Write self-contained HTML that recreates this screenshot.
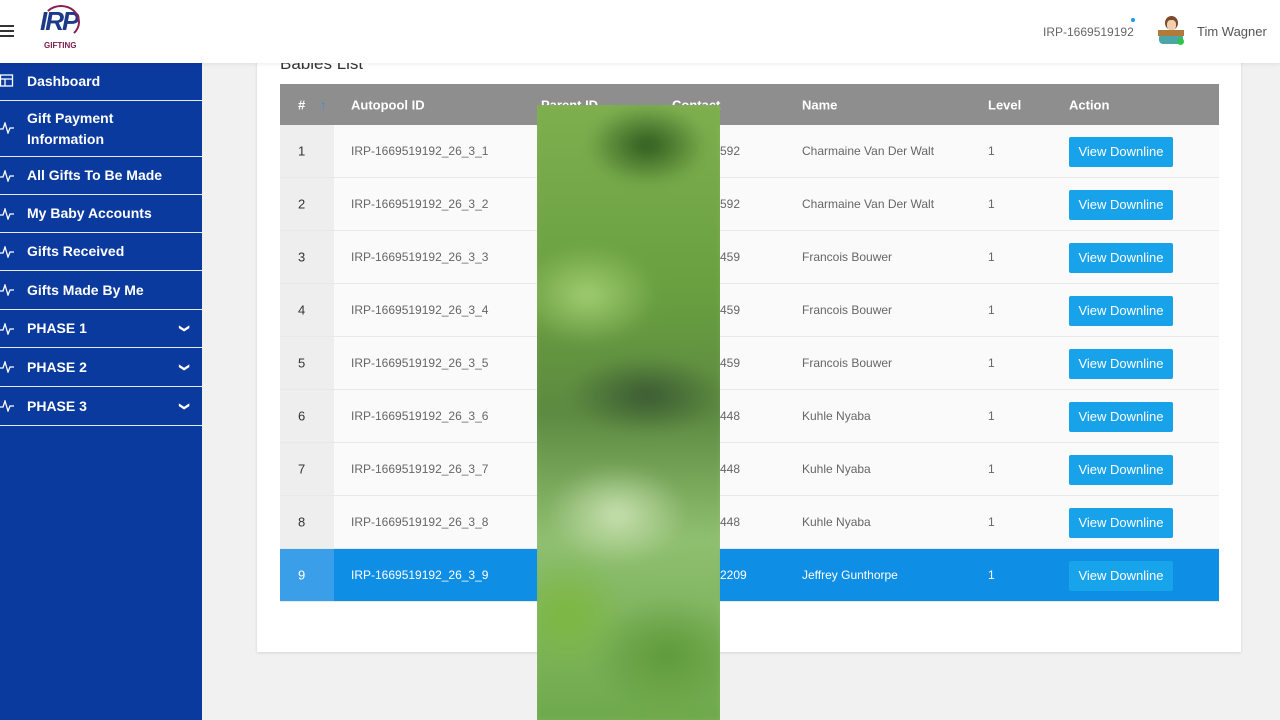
<!DOCTYPE html>
<html><head><meta charset="utf-8"><style>
*{box-sizing:border-box;margin:0;padding:0}
body{width:1280px;height:720px;overflow:hidden;background:#f1f1f1;font-family:"Liberation Sans",sans-serif;position:relative}
.hdr{position:absolute;left:0;top:0;width:1280px;height:63px;background:#fff;box-shadow:0 1px 4px rgba(0,0,0,.08);z-index:2}
.side{position:absolute;left:0;top:63px;width:202px;height:657px;background:#0a3a9e}
.it{position:absolute;left:0;width:202px;border-bottom:1px solid #e6ecf7;color:#fff;font-weight:bold;font-size:14px;line-height:21px;padding-left:27px;display:flex;align-items:center}
.it svg{position:absolute;left:0}
.it .car{position:absolute;right:14px;font-size:10px}
.card{position:absolute;left:257px;top:50px;width:984px;height:602px;background:#fff;box-shadow:0 1px 3px rgba(0,0,0,.12)}
.tbl{position:absolute;left:280px;top:84px;width:939px}
.th{height:41px;background:#8e8e8e;color:#fff;font-size:13px;font-weight:bold;position:relative}
.row{height:53px;position:relative;border-bottom:1px solid #e8e8e8;font-size:12px;color:#666;background:#fafafa}
.row .n{position:absolute;left:0;top:0;width:54px;height:100%;background:#eeeeee}
.c{position:absolute;top:50%;transform:translateY(-50%)}
.btn{position:absolute;left:789px;top:12px;width:104px;height:30px;background:#17a2ea;color:#fff;font-size:13px;border-radius:2px;text-align:center;line-height:30px}
.sel{background:#0f8ee6;color:#fff}
.sel .n{background:#3a9fe8}
.sel .btn{background:#18a4ea}
.blur{position:absolute;left:537px;top:105px;width:183px;height:615px;z-index:3;filter:blur(6px);background:
radial-gradient(ellipse 60px 40px at 120px 50px,#2e5a1e,transparent),
radial-gradient(ellipse 70px 50px at 60px 200px,#a0cc70,transparent),
radial-gradient(ellipse 80px 40px at 120px 300px,#3b5a33,transparent),
radial-gradient(ellipse 70px 50px at 90px 420px,#c8e0b0,transparent),
radial-gradient(ellipse 60px 60px at 40px 520px,#7cb840,transparent),
radial-gradient(ellipse 80px 60px at 140px 560px,#5e9a3a,transparent),
linear-gradient(#7fb050,#6aa040 30%,#5c8a40 50%,#8fbf70 70%,#6da84a)}
.bw{position:absolute;left:537px;top:105px;width:183px;height:615px;overflow:hidden;z-index:3}
.car{display:inline-block;transform:rotate(90deg)}
</style></head><body>
<div class="hdr">
<div style="position:absolute;left:0;top:25px;width:14px;height:2px;background:#333;box-shadow:0 5px 0 #333,0 10px 0 #333"></div>
<div style="position:absolute;left:40px;top:6px;font-style:italic;font-weight:bold;font-size:26px;color:#1d3a8a;letter-spacing:-2px">IRP</div>
<div style="position:absolute;left:42px;top:5px;width:38px;height:34px;border:2px solid #8a2050;border-radius:50%;border-left-color:transparent;border-bottom-color:transparent"></div>
<div style="position:absolute;left:44px;top:41px;font-size:8px;font-weight:bold;color:#7a2050">GIFTING</div>
<div style="position:absolute;left:1043px;top:25px;font-size:12px;color:#666">IRP-1669519192</div>
<div style="position:absolute;left:1131px;top:18px;width:4px;height:4px;border-radius:50%;background:#1a9ae8"></div>
<div style="position:absolute;left:1158px;top:16px;width:26px;height:30px">
<div style="position:absolute;left:7px;top:0;width:13px;height:14px;border-radius:50%;background:#7a4a2a"></div>
<div style="position:absolute;left:9px;top:4px;width:9px;height:10px;border-radius:40%;background:#f2cfae"></div>
<div style="position:absolute;left:1px;top:14px;width:24px;height:14px;border-radius:8px 8px 4px 4px;background:#4aa6a8"></div>
<div style="position:absolute;left:0;top:14px;width:26px;height:6px;background:#b07a3a"></div>
<div style="position:absolute;left:19px;top:22px;width:7px;height:7px;border-radius:50%;background:#2ec44a"></div></div>
<div style="position:absolute;left:1197px;top:24px;font-size:13px;color:#555">Tim Wagner</div>
</div>
<div class="side">
<div class="it" style="top:0;height:38px"><svg width="14" height="14" viewBox="0 0 14 14" style="top:11px" fill="none" stroke="#fff" stroke-width="1.3"><rect x="0.5" y="1" width="12" height="11"/><path d="M0.5 5h12M5 5v7"/></svg>Dashboard</div>
<div class="it" style="top:38px;height:56px"><svg width="14" height="12" viewBox="0 0 14 12" style="top:21px" fill="none" stroke="#fff" stroke-width="1.3"><path d="M0 7h3l2-6 3 10 2-5h4"/></svg>Gift Payment<br>Information</div>
<div class="it" style="top:94px;height:38px"><svg width="14" height="12" viewBox="0 0 14 12" style="top:13px" fill="none" stroke="#fff" stroke-width="1.3"><path d="M0 7h3l2-6 3 10 2-5h4"/></svg>All Gifts To Be Made</div>
<div class="it" style="top:132px;height:38px"><svg width="14" height="12" viewBox="0 0 14 12" style="top:13px" fill="none" stroke="#fff" stroke-width="1.3"><path d="M0 7h3l2-6 3 10 2-5h4"/></svg>My Baby Accounts</div>
<div class="it" style="top:170px;height:38px"><svg width="14" height="12" viewBox="0 0 14 12" style="top:13px" fill="none" stroke="#fff" stroke-width="1.3"><path d="M0 7h3l2-6 3 10 2-5h4"/></svg>Gifts Received</div>
<div class="it" style="top:208px;height:39px"><svg width="14" height="12" viewBox="0 0 14 12" style="top:13px" fill="none" stroke="#fff" stroke-width="1.3"><path d="M0 7h3l2-6 3 10 2-5h4"/></svg>Gifts Made By Me</div>
<div class="it" style="top:247px;height:38px"><svg width="14" height="12" viewBox="0 0 14 12" style="top:13px" fill="none" stroke="#fff" stroke-width="1.3"><path d="M0 7h3l2-6 3 10 2-5h4"/></svg>PHASE 1<span class="car">&#10095;</span></div>
<div class="it" style="top:285px;height:39px"><svg width="14" height="12" viewBox="0 0 14 12" style="top:13px" fill="none" stroke="#fff" stroke-width="1.3"><path d="M0 7h3l2-6 3 10 2-5h4"/></svg>PHASE 2<span class="car">&#10095;</span></div>
<div class="it" style="top:324px;height:39px"><svg width="14" height="12" viewBox="0 0 14 12" style="top:13px" fill="none" stroke="#fff" stroke-width="1.3"><path d="M0 7h3l2-6 3 10 2-5h4"/></svg>PHASE 3<span class="car">&#10095;</span></div>
</div>
<div class="card"><div style="position:absolute;left:23px;top:4px;font-size:17px;color:#333">Babies List</div></div>
<div class="tbl">
<div class="th"><span class="c" style="left:18px">#</span><span class="c" style="left:40px;color:#3a8fd8;font-weight:normal">&#8593;</span><span class="c" style="left:71px">Autopool ID</span><span class="c" style="left:261px">Parent ID</span><span class="c" style="left:392px">Contact</span><span class="c" style="left:522px">Name</span><span class="c" style="left:708px">Level</span><span class="c" style="left:789px">Action</span></div>
<div class="row"><div class="n"></div><span class="c" style="left:18px;font-size:13px;color:#333">1</span><span class="c" style="left:71px">IRP-1669519192_26_3_1</span><span class="c" style="left:440px">592</span><span class="c" style="left:522px">Charmaine Van Der Walt</span><span class="c" style="left:708px">1</span><div class="btn">View Downline</div></div>
<div class="row"><div class="n"></div><span class="c" style="left:18px;font-size:13px;color:#333">2</span><span class="c" style="left:71px">IRP-1669519192_26_3_2</span><span class="c" style="left:440px">592</span><span class="c" style="left:522px">Charmaine Van Der Walt</span><span class="c" style="left:708px">1</span><div class="btn">View Downline</div></div>
<div class="row"><div class="n"></div><span class="c" style="left:18px;font-size:13px;color:#333">3</span><span class="c" style="left:71px">IRP-1669519192_26_3_3</span><span class="c" style="left:440px">459</span><span class="c" style="left:522px">Francois Bouwer</span><span class="c" style="left:708px">1</span><div class="btn">View Downline</div></div>
<div class="row"><div class="n"></div><span class="c" style="left:18px;font-size:13px;color:#333">4</span><span class="c" style="left:71px">IRP-1669519192_26_3_4</span><span class="c" style="left:440px">459</span><span class="c" style="left:522px">Francois Bouwer</span><span class="c" style="left:708px">1</span><div class="btn">View Downline</div></div>
<div class="row"><div class="n"></div><span class="c" style="left:18px;font-size:13px;color:#333">5</span><span class="c" style="left:71px">IRP-1669519192_26_3_5</span><span class="c" style="left:440px">459</span><span class="c" style="left:522px">Francois Bouwer</span><span class="c" style="left:708px">1</span><div class="btn">View Downline</div></div>
<div class="row"><div class="n"></div><span class="c" style="left:18px;font-size:13px;color:#333">6</span><span class="c" style="left:71px">IRP-1669519192_26_3_6</span><span class="c" style="left:440px">448</span><span class="c" style="left:522px">Kuhle Nyaba</span><span class="c" style="left:708px">1</span><div class="btn">View Downline</div></div>
<div class="row"><div class="n"></div><span class="c" style="left:18px;font-size:13px;color:#333">7</span><span class="c" style="left:71px">IRP-1669519192_26_3_7</span><span class="c" style="left:440px">448</span><span class="c" style="left:522px">Kuhle Nyaba</span><span class="c" style="left:708px">1</span><div class="btn">View Downline</div></div>
<div class="row"><div class="n"></div><span class="c" style="left:18px;font-size:13px;color:#333">8</span><span class="c" style="left:71px">IRP-1669519192_26_3_8</span><span class="c" style="left:440px">448</span><span class="c" style="left:522px">Kuhle Nyaba</span><span class="c" style="left:708px">1</span><div class="btn">View Downline</div></div>
<div class="row sel" style="color:#fff"><div class="n"></div><span class="c" style="left:18px;font-size:13px">9</span><span class="c" style="left:71px">IRP-1669519192_26_3_9</span><span class="c" style="left:440px">2209</span><span class="c" style="left:522px">Jeffrey Gunthorpe</span><span class="c" style="left:708px">1</span><div class="btn">View Downline</div></div>
</div>
<div class="bw"><div class="blur" style="left:-10px;top:-10px;width:203px;height:635px"></div></div>
</body></html>
